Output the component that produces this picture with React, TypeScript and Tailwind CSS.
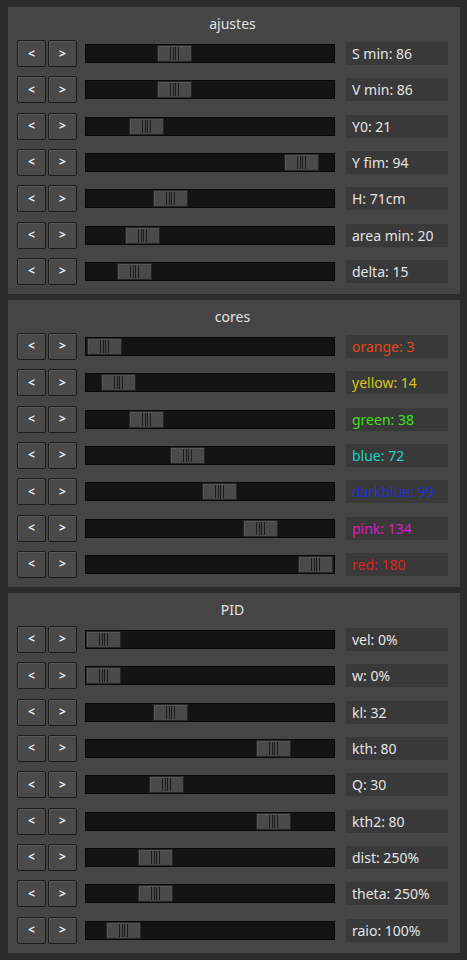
import React from 'react';

type Row = {
    label: string;
    pos: number; // px offset of the thumb inside the track
    color?: string;
};

type Section = {
    title: string;
    rows: Row[];
};

const sections: Section[] = [
    {
        title: 'ajustes',
        rows: [
            { label: 'S min: 86', pos: 71 },
            { label: 'V min: 86', pos: 71 },
            { label: 'Y0: 21', pos: 43 },
            { label: 'Y fim: 94', pos: 198 },
            { label: 'H: 71cm', pos: 67 },
            { label: 'area min: 20', pos: 39 },
            { label: 'delta: 15', pos: 31 },
        ],
    },
    {
        title: 'cores',
        rows: [
            { label: 'orange: 3', pos: 1, color: 'text-[#e0481c]' },
            { label: 'yellow: 14', pos: 15, color: 'text-[#d8c41c]' },
            { label: 'green: 38', pos: 43, color: 'text-[#3ee016]' },
            { label: 'blue: 72', pos: 84, color: 'text-[#20d2c2]' },
            { label: 'darkblue: 99', pos: 116, color: 'text-[#2233d0]' },
            { label: 'pink: 134', pos: 157, color: 'text-[#d61ec4]' },
            { label: 'red: 180', pos: 212, color: 'text-[#e01f1f]' },
        ],
    },
    {
        title: 'PID',
        rows: [
            { label: 'vel: 0%', pos: 0 },
            { label: 'w: 0%', pos: 0 },
            { label: 'kl: 32', pos: 67 },
            { label: 'kth: 80', pos: 170 },
            { label: 'Q: 30', pos: 63 },
            { label: 'kth2: 80', pos: 170 },
            { label: 'dist: 250%', pos: 52 },
            { label: 'theta: 250%', pos: 52 },
            { label: 'raio: 100%', pos: 20 },
        ],
    },
];

function StepButton({ children }: { children: React.ReactNode }) {
    return (
        <button className="w-[29px] h-[27px] flex items-center justify-center bg-[#4a4a4a] border border-[#1c1c1c] rounded-[2px] shadow-[inset_1px_1px_0_#595959] text-[#eef2f6] text-[12px] font-bold leading-none">
            {children}
        </button>
    );
}

function Slider({ pos }: { pos: number }) {
    return (
        <div className="relative w-[250px] h-[19px] bg-[#141414] border border-[#090909] ml-[8px]">
            {/* thumb */}
            <div
                className="absolute top-0 w-[35px] h-[17px] bg-[#4a4a4a] border border-[#262626] shadow-[inset_1px_1px_0_#575757] flex items-center justify-center gap-[1.5px]"
                style={{ left: pos }}
            >
                <span className="w-px h-[13px] bg-[#1c1c1c]" />
                <span className="w-px h-[13px] bg-[#1c1c1c]" />
                <span className="w-px h-[13px] bg-[#1c1c1c]" />
                <span className="w-px h-[13px] bg-[#1c1c1c]" />
            </div>
        </div>
    );
}

function Panel({ section }: { section: Section }) {
    return (
        <div className="bg-[#454545] pt-[7px] pb-[9px] pl-[9px] pr-[12px]">
            <div className="h-[20px] leading-[20px] text-center text-[14px] text-[#e2e2e2] mb-[6px]">
                {section.title}
            </div>
            <div className="flex flex-col gap-[9.33px]">
                {section.rows.map((row) => (
                    <div key={row.label} className="flex items-center h-[27px]">
                        <div className="flex gap-[2px]">
                            <StepButton>&lt;</StepButton>
                            <StepButton>&gt;</StepButton>
                        </div>
                        <Slider pos={row.pos} />
                        <div
                            className={`ml-[11px] w-[102px] h-[23px] bg-[#393939] pl-[6px] text-[14px] leading-[23px] whitespace-nowrap ${
                                row.color ?? 'text-[#e4e4e4]'
                            }`}
                        >
                            {row.label}
                        </div>
                    </div>
                ))}
            </div>
        </div>
    );
}

export default function App() {
    return (
        <div
            className="min-h-[960px] w-[467px] bg-[#2b2b2b] pt-[7px] pl-[8px] pr-[7px] flex flex-col gap-[6px]"
            style={{ fontFamily: '"Noto Sans", "DejaVu Sans", sans-serif' }}
        >
            {sections.map((s) => (
                <Panel key={s.title} section={s} />
            ))}
        </div>
    );
}
